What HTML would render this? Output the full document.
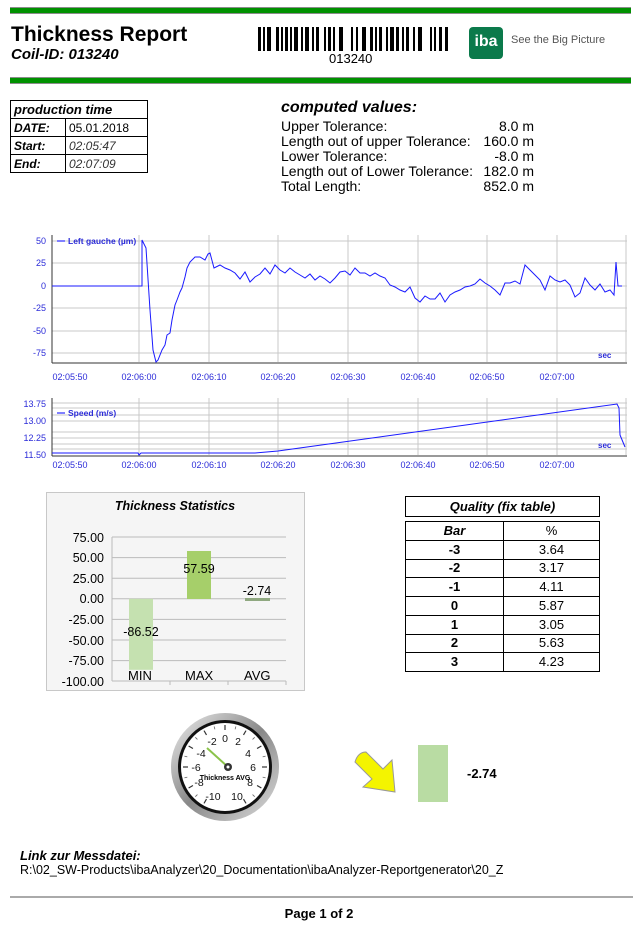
<!DOCTYPE html>
<html><head><meta charset="utf-8"><style>
*{margin:0;padding:0;box-sizing:border-box}
body{width:638px;height:932px;background:#fff;font-family:"Liberation Sans",Arial,sans-serif;position:relative;overflow:hidden;color:#000}
.a{position:absolute}
.gb{position:absolute;left:10px;width:621px;height:7px;background:#009100;border-top:1px solid #8c8c8c;border-bottom:1px solid #8c8c8c}
table{border-collapse:collapse}
.pt td{border:1px solid #000;font-size:12px;height:18px;padding:0 3px}
.qt td{border:1px solid #000;font-size:13px;height:18.75px;line-height:16px;text-align:center}
.cv div{font-size:14px;height:15px;line-height:15px;position:relative}
.cv span{position:absolute;right:0}
</style></head><body>
<div class="gb" style="top:7px"></div>
<div class="gb" style="top:77px"></div>
<div class="a" style="left:11px;top:23px;font-size:21px;font-weight:bold">Thickness Report</div>
<div class="a" style="left:11px;top:46px;font-size:15px;font-weight:bold;font-style:italic">Coil-ID: 013240</div>
<svg class="a" style="left:258px;top:27px" width="192" height="26">
<g fill="#000">
<rect x="0" y="0" width="3" height="24"/><rect x="5" y="0" width="2" height="24"/><rect x="9" y="0" width="4" height="24"/>
<rect x="18" y="0" width="3" height="24"/><rect x="23" y="0" width="2" height="24"/><rect x="27" y="0" width="3" height="24"/><rect x="32" y="0" width="2" height="24"/><rect x="36" y="0" width="4" height="24"/>
<rect x="43" y="0" width="2" height="24"/><rect x="47" y="0" width="4" height="24"/><rect x="54" y="0" width="2" height="24"/><rect x="58" y="0" width="3" height="24"/>
<rect x="66" y="0" width="2" height="24"/><rect x="70" y="0" width="3" height="24"/><rect x="75" y="0" width="2" height="24"/><rect x="81" y="0" width="4" height="24"/>
<rect x="93" y="0" width="2" height="24"/><rect x="98" y="0" width="2" height="24"/><rect x="104" y="0" width="4" height="24"/><rect x="112" y="0" width="3" height="24"/>
<rect x="117" y="0" width="2" height="24"/><rect x="121" y="0" width="3" height="24"/><rect x="128" y="0" width="2" height="24"/><rect x="132" y="0" width="4" height="24"/>
<rect x="138" y="0" width="3" height="24"/><rect x="144" y="0" width="2" height="24"/><rect x="148" y="0" width="3" height="24"/><rect x="155" y="0" width="2" height="24"/>
<rect x="160" y="0" width="4" height="24"/><rect x="172" y="0" width="2" height="24"/><rect x="176" y="0" width="2" height="24"/><rect x="181" y="0" width="3" height="24"/><rect x="187" y="0" width="3" height="24"/></g></svg>
<div class="a" style="left:329px;top:51px;font-size:13px">013240</div>
<div class="a" style="left:469px;top:27px;width:34px;height:32px;background:#0b7a4b;border-radius:4px;color:#fff;font-weight:bold;font-size:16px;text-align:center;line-height:30px">iba</div>
<div class="a" style="left:511px;top:34px;font-size:11px;color:#555">See the Big Picture</div>

<table class="pt a" style="left:10px;top:100px;width:138px">
<tr><td colspan="2" style="font-weight:bold;font-style:italic;font-size:13px">production time</td></tr>
<tr><td style="width:55px;font-weight:bold;font-style:italic">DATE:</td><td>05.01.2018</td></tr>
<tr><td style="font-weight:bold;font-style:italic">Start:</td><td style="font-style:italic;color:#333">02:05:47</td></tr>
<tr><td style="font-weight:bold;font-style:italic">End:</td><td style="font-style:italic;color:#333">02:07:09</td></tr>
</table>

<div class="a" style="left:281px;top:99px;font-size:16px;font-weight:bold;font-style:italic">computed values:</div>
<div class="a cv" style="left:281px;top:119px;width:253px">
<div>Upper Tolerance:<span>8.0 m</span></div>
<div>Length out of upper Tolerance:<span>160.0 m</span></div>
<div>Lower Tolerance:<span>-8.0 m</span></div>
<div>Length out of Lower Tolerance:<span>182.0 m</span></div>
<div>Total Length:<span>852.0 m</span></div>
</div>

<svg class="a" style="left:0;top:225px" width="638" height="250" font-family="Liberation Sans,Arial,sans-serif" font-size="9" fill="#2b2bd8">
<g stroke="#c8c8c8" stroke-width="1">
<line x1="52" y1="16" x2="627" y2="16"/><line x1="52" y1="38" x2="627" y2="38"/><line x1="52" y1="83" x2="627" y2="83"/><line x1="52" y1="106" x2="627" y2="106"/><line x1="52" y1="128" x2="627" y2="128"/>
<line x1="139" y1="10" x2="139" y2="137"/><line x1="209" y1="10" x2="209" y2="137"/><line x1="278" y1="10" x2="278" y2="137"/><line x1="348" y1="10" x2="348" y2="137"/><line x1="418" y1="10" x2="418" y2="137"/><line x1="487" y1="10" x2="487" y2="137"/><line x1="557" y1="10" x2="557" y2="137"/><line x1="626" y1="10" x2="626" y2="137"/>
<line x1="52" y1="61" x2="627" y2="61"/>
</g>
<g stroke="#333"><line x1="52" y1="10" x2="52" y2="138"/><line x1="52" y1="138" x2="627" y2="138"/></g>
<g text-anchor="end"><text x="46" y="19">50</text><text x="46" y="41">25</text><text x="46" y="64">0</text><text x="46" y="86">-25</text><text x="46" y="109">-50</text><text x="46" y="131">-75</text></g>
<g text-anchor="middle"><text x="70" y="155">02:05:50</text><text x="139" y="155">02:06:00</text><text x="209" y="155">02:06:10</text><text x="278" y="155">02:06:20</text><text x="348" y="155">02:06:30</text><text x="418" y="155">02:06:40</text><text x="487" y="155">02:06:50</text><text x="557" y="155">02:07:00</text></g>
<text x="598" y="133" font-weight="bold" font-size="8">sec</text>
<line x1="57" y1="16" x2="65" y2="16" stroke="#00f"/><text x="68" y="19" font-size="8.5" font-weight="bold">Left gauche (µm)</text>
<polyline fill="none" stroke="#1a1aff" stroke-width="1" transform="translate(0,-225)" points="52,286 142,286 142,240 146,248 150,310 153,350 156,362 158,360 162,350 165,345 167,335 170,333 172,320 175,305 177,300 180,292 182,288 185,277 187,268 190,262 195,257 200,257 205,260 208,254 210,253 214,268 220,265 225,268 230,270 235,273 240,279 245,272 250,282 255,277 260,274 265,268 270,274 275,265 280,270 285,273 290,268 295,272 300,275 305,278 310,274 315,280 320,276 325,279 330,283 335,278 340,272 345,271 350,275 355,268 360,273 365,273 370,276 375,273 380,276 385,278 390,285 395,287 400,290 405,292 410,287 415,298 420,302 425,296 430,299 435,299 440,293 445,302 450,295 455,292 460,290 465,287 470,286 475,284 480,279 485,283 490,286 495,290 500,295 505,283 510,283 515,281 520,284 525,265 530,270 535,275 540,280 545,290 550,276 555,280 560,282 565,280 570,285 575,297 580,293 585,278 590,285 595,290 600,284 605,292 610,290 614,295 616,262 618,286 622,286"/>
<g stroke="#c8c8c8"><line x1="52" y1="178" x2="627" y2="178"/><line x1="52" y1="183" x2="627" y2="183"/><line x1="52" y1="190" x2="627" y2="190"/><line x1="52" y1="196" x2="627" y2="196"/><line x1="52" y1="207" x2="627" y2="207"/><line x1="52" y1="213" x2="627" y2="213"/><line x1="52" y1="219" x2="627" y2="219"/><line x1="52" y1="224" x2="627" y2="224"/>
<line x1="139" y1="173" x2="139" y2="230"/><line x1="209" y1="173" x2="209" y2="230"/><line x1="278" y1="173" x2="278" y2="230"/><line x1="348" y1="173" x2="348" y2="230"/><line x1="418" y1="173" x2="418" y2="230"/><line x1="487" y1="173" x2="487" y2="230"/><line x1="557" y1="173" x2="557" y2="230"/><line x1="626" y1="173" x2="626" y2="230"/></g>
<g stroke="#333"><line x1="52" y1="173" x2="52" y2="231"/><line x1="52" y1="231" x2="627" y2="231"/></g>
<g text-anchor="end"><text x="46" y="182">13.75</text><text x="46" y="199">13.00</text><text x="46" y="216">12.25</text><text x="46" y="233">11.50</text></g>
<g text-anchor="middle"><text x="70" y="243">02:05:50</text><text x="139" y="243">02:06:00</text><text x="209" y="243">02:06:10</text><text x="278" y="243">02:06:20</text><text x="348" y="243">02:06:30</text><text x="418" y="243">02:06:40</text><text x="487" y="243">02:06:50</text><text x="557" y="243">02:07:00</text></g>
<text x="598" y="223" font-weight="bold" font-size="8">sec</text>
<line x1="57" y1="188" x2="65" y2="188" stroke="#00f"/><text x="68" y="191" font-size="8.5" font-weight="bold">Speed (m/s)</text>
<polyline fill="none" stroke="#1a1aff" points="52,228 138,228 139,230 141,228 255,228 278,226 617,179 619,183 620,210 625,222"/>
</svg>

<svg class="a" style="left:46px;top:492px" width="259" height="199" font-family="Liberation Sans,Arial,sans-serif">
<rect x="0.5" y="0.5" width="258" height="198" fill="#f5f5f5" stroke="#c8c8c8"/>
<text x="129" y="18" text-anchor="middle" font-size="12.5" font-weight="bold" font-style="italic">Thickness Statistics</text>
<g stroke="#bbb"><line x1="66" y1="45" x2="240" y2="45"/><line x1="66" y1="65.6" x2="240" y2="65.6"/><line x1="66" y1="86.2" x2="240" y2="86.2"/><line x1="66" y1="106.8" x2="240" y2="106.8"/><line x1="66" y1="127.4" x2="240" y2="127.4"/><line x1="66" y1="148" x2="240" y2="148"/><line x1="66" y1="168.6" x2="240" y2="168.6"/><line x1="66" y1="189" x2="240" y2="189"/><line x1="66" y1="45" x2="66" y2="189"/>
<line x1="124" y1="189" x2="124" y2="193"/><line x1="182" y1="189" x2="182" y2="193"/><line x1="240" y1="189" x2="240" y2="193"/></g>
<rect x="83" y="106.8" width="24" height="71" fill="#c5e1b0"/>
<rect x="141" y="59" width="24" height="48" fill="#a6cf6a"/>
<rect x="199" y="106" width="25" height="3" fill="#8fa880"/>
<g font-size="12.5" text-anchor="end"><text x="58" y="50">75.00</text><text x="58" y="70">50.00</text><text x="58" y="91">25.00</text><text x="58" y="111">0.00</text><text x="58" y="132">-25.00</text><text x="58" y="153">-50.00</text><text x="58" y="173">-75.00</text><text x="58" y="194">-100.00</text></g>
<g font-size="12.5" text-anchor="middle"><text x="95" y="144">-86.52</text><text x="153" y="81">57.59</text><text x="211" y="103">-2.74</text></g>
</svg>
<div class="a" style="left:128px;top:668px;font-size:13px">MIN</div>
<div class="a" style="left:185px;top:668px;font-size:13px">MAX</div>
<div class="a" style="left:244px;top:668px;font-size:13px">AVG</div>

<table class="qt a" style="left:405px;top:496px;width:195px"><tr><td style="font-weight:bold;font-style:italic;height:20px">Quality (fix table)</td></tr></table>
<table class="qt a" style="left:405px;top:521px;width:195px">
<tr><td style="width:98px;font-weight:bold;font-style:italic">Bar</td><td>%</td></tr>
<tr><td><b>-3</b></td><td>3.64</td></tr><tr><td><b>-2</b></td><td>3.17</td></tr><tr><td><b>-1</b></td><td>4.11</td></tr><tr><td><b>0</b></td><td>5.87</td></tr><tr><td><b>1</b></td><td>3.05</td></tr><tr><td><b>2</b></td><td>5.63</td></tr><tr><td><b>3</b></td><td>4.23</td></tr>
</table>

<svg class="a" style="left:170px;top:710px" width="110" height="114" font-family="Liberation Sans,Arial,sans-serif">
<defs><linearGradient id="r" x1="0" y1="0" x2="1" y2="1"><stop offset="0" stop-color="#eee"/><stop offset=".5" stop-color="#888"/><stop offset="1" stop-color="#ddd"/></linearGradient></defs>
<circle cx="55" cy="57" r="54" fill="url(#r)"/>
<circle cx="55" cy="57" r="47" fill="#111"/>
<circle cx="55" cy="57" r="44" fill="#fff"/>
<g stroke="#333" stroke-width="1.2">
<line x1="55" y1="15" x2="55" y2="20" transform="rotate(-150 55 57)"/><line x1="55" y1="15" x2="55" y2="20" transform="rotate(-120 55 57)"/><line x1="55" y1="15" x2="55" y2="20" transform="rotate(-90 55 57)"/><line x1="55" y1="15" x2="55" y2="20" transform="rotate(-60 55 57)"/><line x1="55" y1="15" x2="55" y2="20" transform="rotate(-30 55 57)"/><line x1="55" y1="15" x2="55" y2="20"/><line x1="55" y1="15" x2="55" y2="20" transform="rotate(30 55 57)"/><line x1="55" y1="15" x2="55" y2="20" transform="rotate(60 55 57)"/><line x1="55" y1="15" x2="55" y2="20" transform="rotate(90 55 57)"/><line x1="55" y1="15" x2="55" y2="20" transform="rotate(120 55 57)"/><line x1="55" y1="15" x2="55" y2="20" transform="rotate(150 55 57)"/>
</g>
<g stroke="#666" stroke-width="0.8">
<line x1="55" y1="15" x2="55" y2="18" transform="rotate(-135 55 57)"/><line x1="55" y1="15" x2="55" y2="18" transform="rotate(-105 55 57)"/><line x1="55" y1="15" x2="55" y2="18" transform="rotate(-75 55 57)"/><line x1="55" y1="15" x2="55" y2="18" transform="rotate(-45 55 57)"/><line x1="55" y1="15" x2="55" y2="18" transform="rotate(-15 55 57)"/><line x1="55" y1="15" x2="55" y2="18" transform="rotate(15 55 57)"/><line x1="55" y1="15" x2="55" y2="18" transform="rotate(45 55 57)"/><line x1="55" y1="15" x2="55" y2="18" transform="rotate(75 55 57)"/><line x1="55" y1="15" x2="55" y2="18" transform="rotate(105 55 57)"/><line x1="55" y1="15" x2="55" y2="18" transform="rotate(135 55 57)"/>
</g>
<g font-size="10.5" text-anchor="middle" fill="#111">
<text x="55" y="32">0</text><text x="68" y="35">2</text><text x="78" y="47">4</text><text x="83" y="61">6</text><text x="80" y="76">8</text><text x="67" y="90">10</text>
<text x="42" y="35">-2</text><text x="31" y="47">-4</text><text x="26" y="61">-6</text><text x="29" y="76">-8</text><text x="43" y="90">-10</text>
</g>
<text x="55" y="70" font-size="7" font-weight="bold" text-anchor="middle">Thickness AVG</text>
<line x1="58" y1="57" x2="37" y2="38" stroke="#8bc34a" stroke-width="2"/>
<circle cx="58" cy="57" r="4" fill="#333"/><circle cx="58" cy="57" r="1.5" fill="#fff"/>
</svg>
<svg class="a" style="left:352px;top:750px" width="46" height="46"><path d="M3 12 L20 29 L11 37 L43 42 L40 10 L31 19 L14 2 Q6 2 3 12Z" fill="#f4f400" stroke="#999" stroke-width="1"/></svg>
<div class="a" style="left:418px;top:745px;width:30px;height:57px;background:#b9dca3"></div>
<div class="a" style="left:467px;top:766px;font-size:13px;font-weight:bold">-2.74</div>

<div class="a" style="left:20px;top:848px;font-size:13px;font-weight:bold;font-style:italic">Link zur Messdatei:</div>
<div class="a" style="left:20px;top:863px;font-size:12.5px">R:\02_SW-Products\ibaAnalyzer\20_Documentation\ibaAnalyzer-Reportgenerator\20_Z</div>
<div class="a" style="left:10px;top:896px;width:623px;height:2px;background:#aaa"></div>
<div class="a" style="left:0;width:638px;top:906px;text-align:center;font-size:13px;font-weight:bold">Page 1 of 2</div>
</body></html>
